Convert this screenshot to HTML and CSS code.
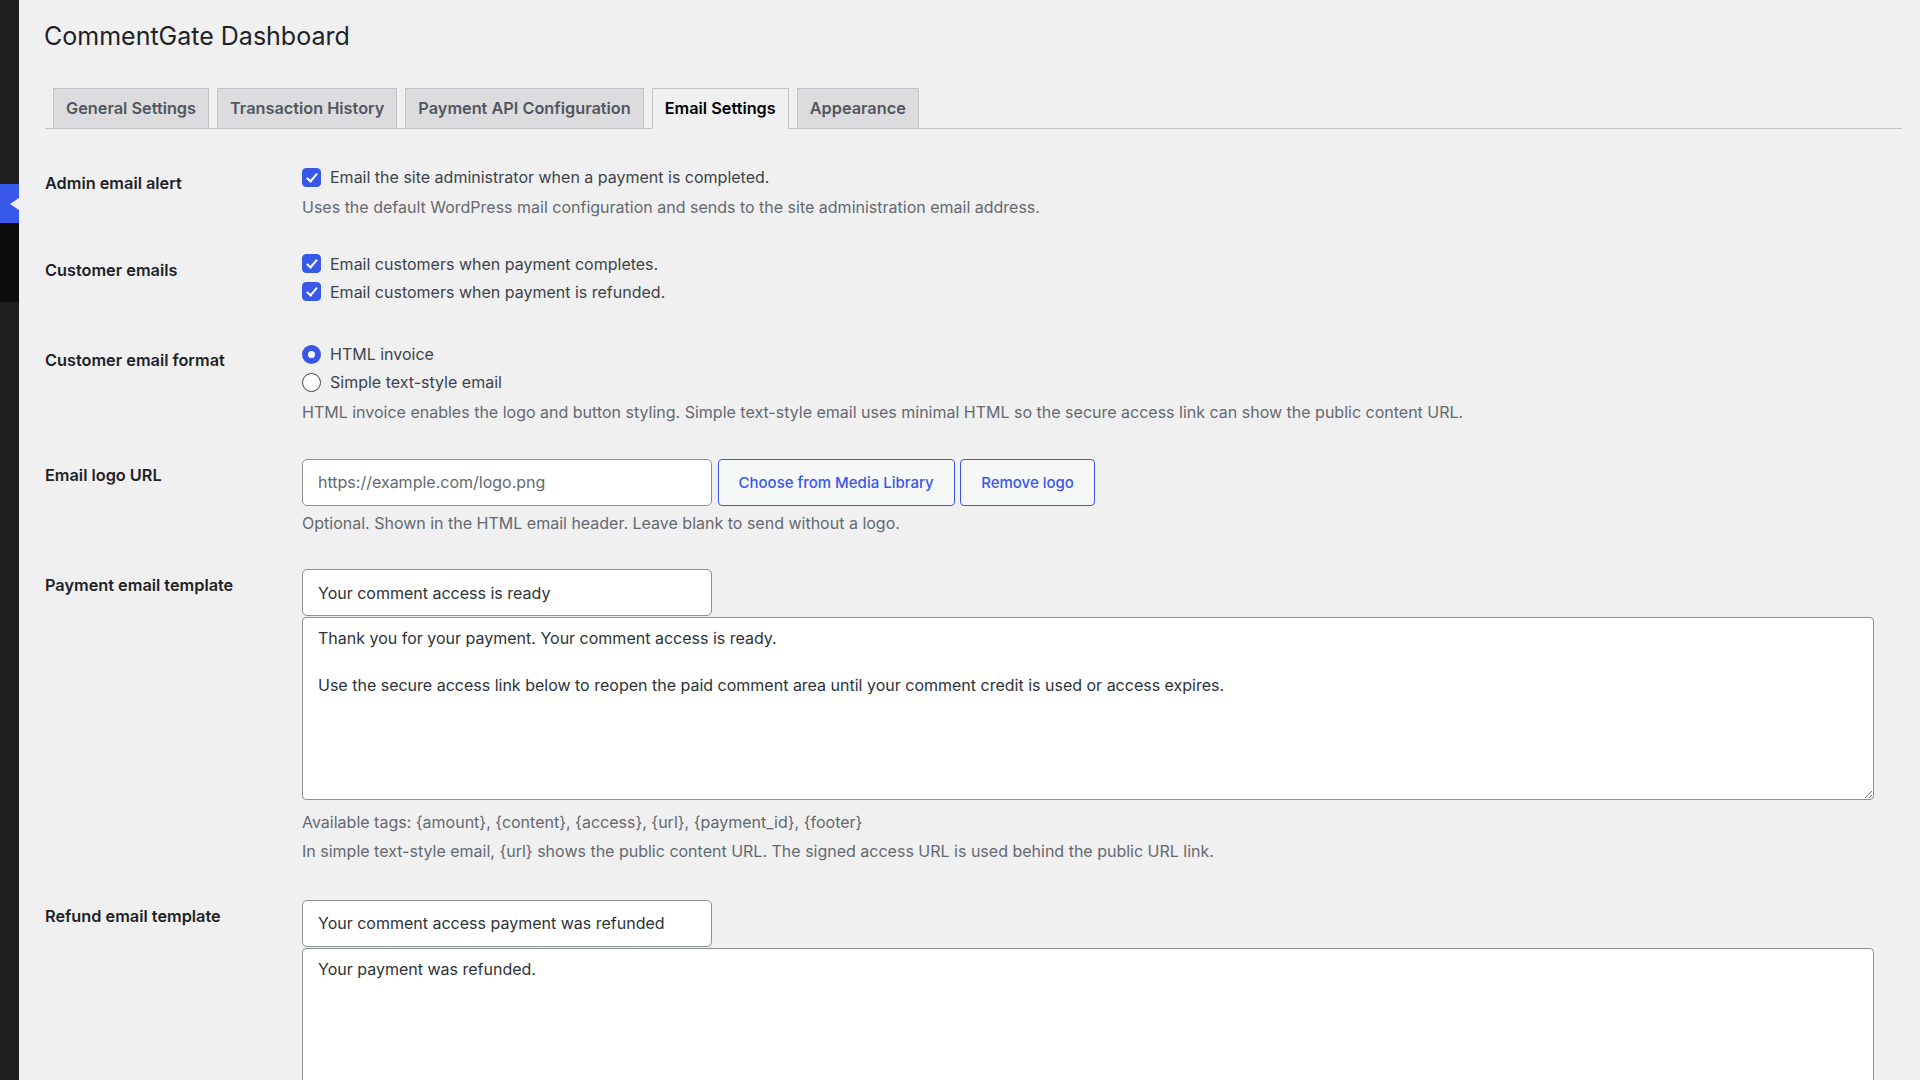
FILE: index.html
```html
<html>
  <head>
    <link rel="stylesheet" href="styles.css">
  </head>

  <body>
    <div class="admin">
      <nav class="adminmenu">
        <div class="menu-top"></div>
        <div class="menu-current"></div>
        <div class="menu-sub"></div>
        <div class="menu-rest"></div>
      </nav>

      <main class="wrap">
        <h1>CommentGate Dashboard</h1>

        <nav class="nav-tabs">
          <a href="#" class="nav-tab">General Settings</a>
          <a href="#" class="nav-tab">Transaction History</a>
          <a href="#" class="nav-tab">Payment API Configuration</a>
          <a href="#" class="nav-tab nav-tab-active">Email Settings</a>
          <a href="#" class="nav-tab">Appearance</a>
        </nav>

        <form class="settings">
          <div class="form-row">
            <div class="form-label">Admin email alert</div>
            <div class="form-field">
              <div class="choices">
                <label class="choice"><input type="checkbox" checked> Email the site administrator when a payment is completed.</label>
              </div>
              <p class="description">Uses the default WordPress mail configuration and sends to the site administration email address.</p>
            </div>
          </div>

          <div class="form-row">
            <div class="form-label">Customer emails</div>
            <div class="form-field">
              <div class="choices">
                <label class="choice"><input type="checkbox" checked> Email customers when payment completes.</label>
                <label class="choice"><input type="checkbox" checked> Email customers when payment is refunded.</label>
              </div>
            </div>
          </div>

          <div class="form-row">
            <div class="form-label">Customer email format</div>
            <div class="form-field">
              <div class="choices">
                <label class="choice"><input type="radio" name="email_format" checked> HTML invoice</label>
                <label class="choice"><input type="radio" name="email_format"> Simple text-style email</label>
              </div>
              <p class="description">HTML invoice enables the logo and button styling. Simple text-style email uses minimal HTML so the secure access link can show the public content URL.</p>
            </div>
          </div>

          <div class="form-row">
            <div class="form-label">Email logo URL</div>
            <div class="form-field">
              <div class="logo-picker">
                <input type="text" class="regular-text" placeholder="https://example.com/logo.png">
                <button type="button" class="button">Choose from Media Library</button>
                <button type="button" class="button">Remove logo</button>
              </div>
              <p class="description">Optional. Shown in the HTML email header. Leave blank to send without a logo.</p>
            </div>
          </div>

          <div class="form-row">
            <div class="form-label">Payment email template</div>
            <div class="form-field">
              <input type="text" class="regular-text" value="Your comment access is ready">
              <textarea class="large-text">Thank you for your payment. Your comment access is ready.

Use the secure access link below to reopen the paid comment area until your comment credit is used or access expires.</textarea>
              <p class="description">Available tags: {amount}, {content}, {access}, {url}, {payment_id}, {footer}</p>
              <p class="description">In simple text-style email, {url} shows the public content URL. The signed access URL is used behind the public URL link.</p>
            </div>
          </div>

          <div class="form-row">
            <div class="form-label">Refund email template</div>
            <div class="form-field">
              <input type="text" class="regular-text" value="Your comment access payment was refunded">
              <textarea class="large-text">Your payment was refunded.</textarea>
            </div>
          </div>
        </form>
      </main>
    </div>
  </body>
</html>
```

FILE: styles.css
```css
html,
body {
  margin: 0;
  height: 100%;
  overflow: hidden;
}

body {
  background: #f0f0f1;
  color: #3c434a;
  font-family: Inter, "Liberation Sans", sans-serif;
  font-size: 16px;
}

.admin {
  display: flex;
  min-height: 100%;
}

/* collapsed admin menu strip */
.adminmenu {
  width: 19px;
  flex: none;
  display: flex;
  flex-direction: column;
  background: #1e1e1e;
}

.menu-top {
  height: 184px;
}

.menu-current {
  position: relative;
  height: 39px;
  background: #3858e9;
}

.menu-current::after {
  content: "";
  position: absolute;
  right: 0;
  top: 14px;
  border-top: 6px solid transparent;
  border-bottom: 6px solid transparent;
  border-right: 9px solid #f0f0f1;
}

.menu-sub {
  height: 79px;
  background: #0c0c0c;
}

.menu-rest {
  flex: 1;
}

.wrap {
  flex: 1;
  padding: 0 18px 0 26px;
}

h1 {
  margin: 18px 0 0 -1px;
  font-size: 25px;
  font-weight: 400;
  line-height: 36px;
  color: #1d2327;
}

/* tabs */
.nav-tabs {
  display: flex;
  margin-top: 34px;
  border-bottom: 1px solid #c3c4c7;
}

.nav-tab {
  margin: 0 0 -1px 8px;
  padding: 6px 12px;
  border: 1px solid #c3c4c7;
  background: #dcdcde;
  color: #50575e;
  font-size: 16.3px;
  font-weight: 600;
  line-height: 27px;
  text-decoration: none;
}

.nav-tab-active {
  background: #f0f0f1;
  border-bottom-color: #f0f0f1;
  color: #000;
}

/* settings form */
.settings {
  margin-top: 38px;
  display: flex;
  flex-direction: column;
  gap: 34.5px;
}

.form-row {
  display: grid;
  grid-template-columns: 257px 1fr;
}

.form-label {
  padding-top: 5px;
  color: #1d2327;
  font-size: 16.3px;
  font-weight: 600;
  line-height: 22px;
}

.form-field {
  padding-right: 12px;
}

.choices {
  margin: -4px 0 4px;
}

.choice {
  display: flex;
  align-items: center;
  gap: 9px;
  height: 28px;
}

.choice input {
  appearance: none;
  flex: none;
  box-sizing: border-box;
  width: 19px;
  height: 19px;
  margin: 0;
  position: relative;
  background: #fff;
}

.choice input[type="checkbox"] {
  border: 1px solid #8c8f94;
  border-radius: 4px;
}

.choice input[type="checkbox"]:checked {
  background: #3858e9;
  border-color: #3858e9;
}

.choice input[type="checkbox"]:checked::before {
  content: "";
  position: absolute;
  left: 5.5px;
  top: 2px;
  width: 4px;
  height: 9px;
  border: solid #fff;
  border-width: 0 2.5px 2.5px 0;
  transform: rotate(40deg);
}

.choice input[type="radio"] {
  border: 1.5px solid #3c434a;
  border-radius: 50%;
}

.choice input[type="radio"]:checked {
  border: 6px solid #3858e9;
}

.description {
  margin: 5px 0 0;
  color: #646970;
  line-height: 24px;
}

.choices + .description {
  margin-top: 0;
}

.logo-picker {
  display: flex;
  gap: 5.5px;
}

.regular-text {
  display: block;
  box-sizing: border-box;
  width: 410px;
  height: 47px;
  margin: 0;
  padding: 0 15px;
  border: 1px solid #8c8f94;
  border-radius: 5px;
  background: #fff;
  color: #2c3338;
  font-family: inherit;
  font-size: 16px;
}

.regular-text::placeholder {
  color: #646970;
}

.button {
  height: 47px;
  padding: 0 20px;
  border: 1px solid #3858e9;
  border-radius: 4px;
  background: #f6f7f7;
  color: #3858e9;
  font-family: inherit;
  font-size: 15px;
  font-weight: 500;
}

.large-text {
  display: block;
  box-sizing: border-box;
  width: 99%;
  height: 183px;
  margin: 1px 0 0;
  padding: 9px 15px;
  border: 1px solid #8c8f94;
  border-radius: 4px;
  background: #fff;
  color: #2c3338;
  font-family: inherit;
  font-size: 16px;
  line-height: 23.3px;
}

.large-text + .description {
  margin-top: 10px;
}

.large-text + .description + .description {
  margin-bottom: 2px;
}
```
